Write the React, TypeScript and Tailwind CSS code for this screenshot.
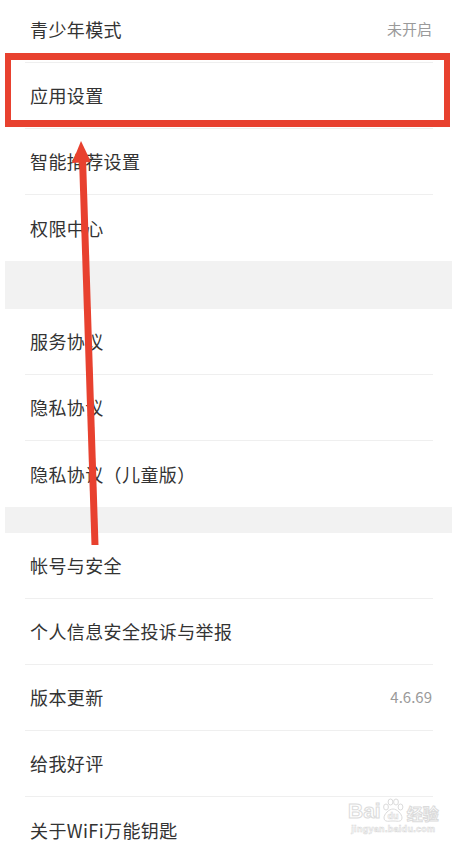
import React from "react";

type Row = { label: string; value?: string };

const SECTIONS: Row[][] = [
  [
    { label: "青少年模式", value: "未开启" },
    { label: "应用设置" },
    { label: "智能推荐设置" },
    { label: "权限中心" },
  ],
  [{ label: "服务协议" }, { label: "隐私协议" }, { label: "隐私协议（儿童版）" }],
  [
    { label: "帐号与安全" },
    { label: "个人信息安全投诉与举报" },
    { label: "版本更新", value: "4.6.69" },
    { label: "给我好评" },
    { label: "关于WiFi万能钥匙" },
  ],
];

const font = "[font-family:'Noto_Sans_CJK_SC','Noto_Sans',sans-serif]";

function SettingRow({ row, first, last }: { row: Row; first: boolean; last: boolean }) {
  return (
    <div
      className={`ml-[25px] mr-[32px] flex items-center justify-between pl-[5px] pr-px ${
        first ? "h-[63px] pb-[3px]" : "h-[66px]"
      } ${last ? "" : "border-b border-[#efefef]"}`}
    >
      <span className="text-[18px] text-[#333333] tracking-[0.4px]">{row.label}</span>
      {row.value && <span className="text-[15px] text-[#9a9a9a]">{row.value}</span>}
    </div>
  );
}

function Watermark() {
  return (
    <div className="absolute left-[348px] top-[798px] flex flex-col items-center opacity-90 pointer-events-none">
      <div className="flex items-end gap-[1px]">
        <span className="text-[21px] leading-none font-bold text-white [font-family:'Liberation_Sans',sans-serif] [-webkit-text-stroke:1px_#d8d8d8]">
          Bai
        </span>
        <svg width="22" height="24" viewBox="0 0 22 24" className="-mb-[1px]">
          <g fill="#fff" stroke="#d8d8d8" strokeWidth="1">
            <ellipse cx="4" cy="9" rx="2.4" ry="3" />
            <ellipse cx="8.5" cy="4" rx="2.4" ry="3" />
            <ellipse cx="14" cy="4" rx="2.4" ry="3" />
            <ellipse cx="18.5" cy="9" rx="2.4" ry="3" />
            <path d="M11 11c-4 0-9 5-9 9 0 3 3 3.5 5 3.2 2-.3 6-.3 8 0 2 .3 5-.2 5-3.2 0-4-5-9-9-9z" />
          </g>
          <text x="11" y="21" textAnchor="middle" fontSize="9" fontWeight="700" fill="#fff" stroke="#d8d8d8" strokeWidth="0.6" fontFamily="Liberation Sans, sans-serif">
            du
          </text>
        </svg>
        <span className="ml-[2px] text-[16px] leading-none font-bold text-white [-webkit-text-stroke:1px_#d8d8d8]">
          经验
        </span>
      </div>
      <span className="mt-[4px] text-[9px] leading-none font-bold text-white tracking-[0.3px] [font-family:'Liberation_Sans',sans-serif] [-webkit-text-stroke:0.6px_#d8d8d8]">
        jingyan.baidu.com
      </span>
    </div>
  );
}

export default function App() {
  return (
    <div className={`relative w-[465px] h-[845px] overflow-hidden bg-white ${font}`}>
      {SECTIONS.map((rows, si) => (
        <div key={si}>
          {si === 1 && <div className="ml-[5px] mr-[13px] h-[48px] bg-[#f2f2f2]" />}
          {si === 2 && <div className="ml-[5px] mr-[13px] h-[26px] bg-[#f2f2f2]" />}
          {rows.map((r, i) => (
            <SettingRow key={r.label} row={r} first={si === 0 && i === 0} last={i === rows.length - 1} />
          ))}
        </div>
      ))}

      {/* highlight box */}
      <div className="absolute left-[5px] top-[53px] w-[445px] h-[74px] border-y-[7px] border-x-[6px] border-[#e8412f]" />

      {/* arrow */}
      <svg className="absolute inset-0 pointer-events-none" width="465" height="845">
        <line x1="95" y1="545" x2="82.5" y2="158" stroke="#e8412f" strokeWidth="7" />
        <polygon points="81,141 72,163 91,162" fill="#e8412f" />
      </svg>

      <Watermark />
    </div>
  );
}
